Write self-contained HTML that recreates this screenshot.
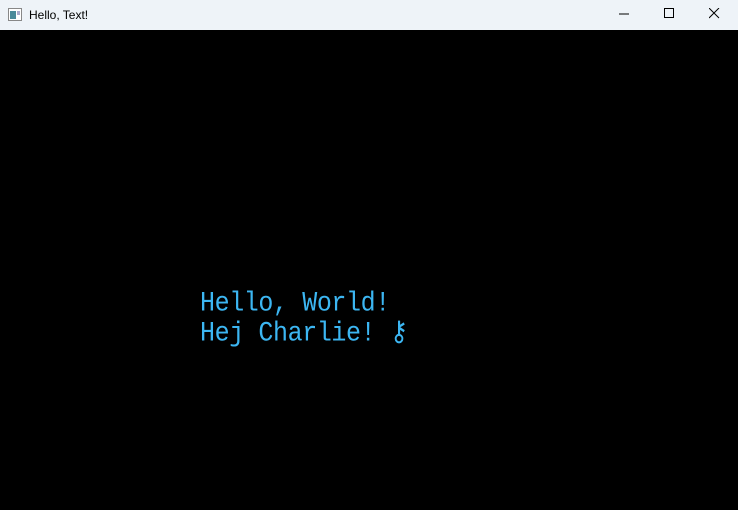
<!DOCTYPE html><html><head><style>
body{margin:0;width:738px;height:510px;overflow:hidden;background:#000;font-family:"Liberation Sans",sans-serif}
.tb{position:absolute;left:0;top:0;width:738px;height:30px;background:#eef3f8}
.t{position:absolute;left:29px;top:8px;font-size:12px;color:#000}
.txt{position:absolute;left:200px;font-family:"Liberation Mono",monospace;font-size:25px;letter-spacing:-0.4px;color:#3cb6f2;transform:scaleY(1.12);transform-origin:left top;line-height:25px;white-space:pre}
</style></head><body>
<div class="tb">
<svg style="position:absolute;left:8px;top:8px" width="14" height="13"><rect x=".5" y=".5" width="13" height="12" fill="#fff" stroke="#888"/><rect x="2" y="3" width="6" height="8" fill="#4a8a9a"/><rect x="9" y="3" width="3" height="4" fill="#aac"/></svg>
<div class="t">Hello, Text!</div>
<svg style="position:absolute;left:619px;top:9px" width="10" height="10"><line x1="0" y1="5" x2="10" y2="5" stroke="#000"/></svg>
<svg style="position:absolute;left:664px;top:8px" width="11" height="11"><rect x=".5" y=".5" width="9" height="9" fill="none" stroke="#000"/></svg>
<svg style="position:absolute;left:709px;top:8px" width="11" height="11"><path d="M0 0L10 10M10 0L0 10" stroke="#000"/></svg>
</div>
<div class="txt" style="top:289px">Hello, World!</div>
<div class="txt" style="top:319px">Hej Charlie! ⚷</div>
</body></html>
